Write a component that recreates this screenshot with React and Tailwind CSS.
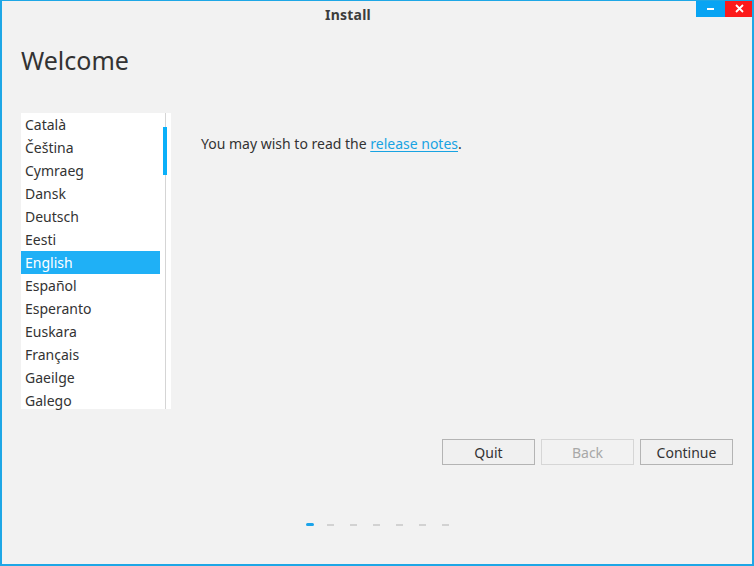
import React from "react";

const languages = [
  "Català",
  "Čeština",
  "Cymraeg",
  "Dansk",
  "Deutsch",
  "Eesti",
  "English",
  "Español",
  "Esperanto",
  "Euskara",
  "Français",
  "Gaeilge",
  "Galego",
];

const buttonClass = (disabled) =>
  `w-[93px] h-[26px] flex items-center justify-center text-[14px] border ${
    disabled
      ? "border-[#d6d6d6] text-[#a8a8a8] bg-[#f2f2f2]"
      : "border-[#b4b4b4] text-[#333] bg-[#f0f0f0]"
  }`;

export default function App() {
  return (
    <div
      className="w-[754px] h-[566px] bg-[#f2f2f2] border-x-2 border-b-2 border-t border-[#1ea7e6] flex flex-col text-[#333] overflow-hidden"
      style={{ fontFamily: '"Noto Sans", "Open Sans", sans-serif' }}
    >
      {/* title bar */}
      <div className="relative h-[27px] flex items-center justify-center pr-[58px]">
        <span className="text-[14px] font-bold text-[#3c3c3c] tracking-[0.2px]">
          Install
        </span>
        <div className="absolute right-[-2px] top-[-1px] flex">
          <div className="w-[29px] h-[17px] bg-[#08a4f3] flex items-center justify-center">
            <div className="w-[7px] h-[2px] bg-white" />
          </div>
          <div className="w-[29px] h-[17px] bg-[#fc1a1a] flex items-center justify-center">
            <svg width="9" height="9" viewBox="0 0 9 9">
              <path d="M1 1 L8 8 M8 1 L1 8" stroke="white" strokeWidth="1.8" />
            </svg>
          </div>
        </div>
      </div>

      <h1 className="ml-[19px] mt-[15px] text-[25px] leading-[34px] text-[#333]">
        Welcome
      </h1>

      <div className="flex mt-[36px] ml-[19px]">
        <div className="w-[150px] h-[296px] bg-white flex">
          <ul className="w-[139px] flex flex-col">
            {languages.map((l) => (
              <li
                key={l}
                className={`h-[23px] pl-[4px] text-[14px] leading-[23px] ${
                  l === "English" ? "bg-[#1fb0f6] text-white" : "text-[#333]"
                }`}
              >
                {l}
              </li>
            ))}
          </ul>
          <div className="relative w-[11px] h-full">
            <div className="absolute left-[5px] top-0 bottom-0 w-px bg-[#d5d5d5]" />
            <div className="absolute left-[3px] top-[14px] w-[4px] h-[48px] bg-[#0ab0f9]" />
          </div>
        </div>
        <p className="ml-[30px] mt-[20px] text-[14px] text-[#333]">
          You may wish to read the{" "}
          <span className="text-[#18a3e2] underline underline-offset-2">
            release notes
          </span>
          .
        </p>
      </div>

      <div className="flex justify-end gap-[6px] mr-[19px] mt-[30px]">
        <button className={buttonClass(false)}>Quit</button>
        <button className={buttonClass(true)}>Back</button>
        <button className={buttonClass(false)}>Continue</button>
      </div>

      <div className="flex items-center gap-[16px] ml-[304px] mt-[58px]">
        <div className="w-[8px] h-[3px] rounded-full bg-[#1ba4ea] mr-[-3px]" />
        {[0, 1, 2, 3, 4, 5].map((i) => (
          <div key={i} className="w-[7px] h-[2px] bg-[#d2d2d2]" />
        ))}
      </div>
    </div>
  );
}
